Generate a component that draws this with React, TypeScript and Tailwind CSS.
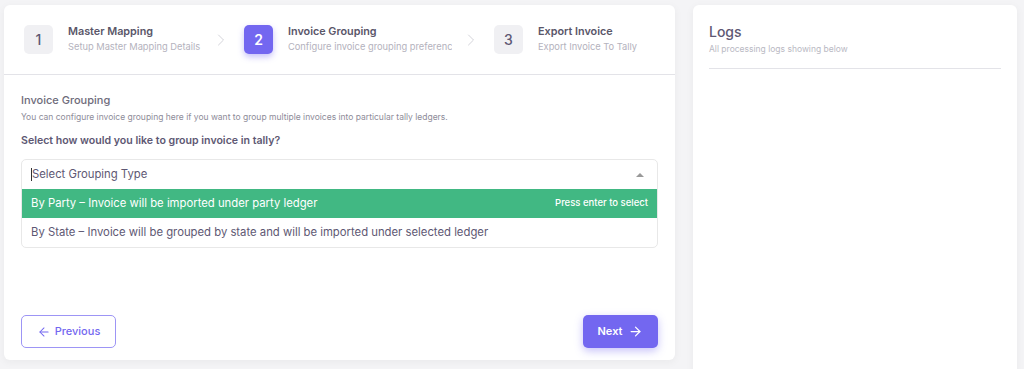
import { ChevronRight, ArrowLeft, ArrowRight } from "lucide-react";

const steps = [
  { n: "1", title: "Master Mapping", sub: "Setup Master Mapping Details", active: false, w: "w-[134px]" },
  { n: "2", title: "Invoice Grouping", sub: "Configure invoice grouping preferenc", active: true, w: "w-[164px]" },
  { n: "3", title: "Export Invoice", sub: "Export Invoice To Tally", active: false, w: "w-[130px]" },
];

export default function App() {
  return (
    <div
      className="w-[1024px] h-[369px] overflow-hidden bg-[#f4f4f6] flex gap-[18px] pl-[4px] pt-[5px] text-[#5e5873]"
      style={{ fontFamily: "Inter, 'Open Sans', sans-serif" }}
    >
      {/* wizard card */}
      <div className="w-[671px] h-[355px] bg-white rounded-md shadow-[0_2px_8px_rgba(34,41,47,0.05)] flex flex-col">
        <div className="h-[70px] border-b border-[#e3e3e8] flex items-center pl-[20px]">
          {steps.map((s, i) => (
            <div key={s.n} className="flex items-center">
              <div
                className={
                  s.active
                    ? "w-[29px] h-[29px] rounded-[5px] bg-[#7367f0] text-white flex items-center justify-center text-[14px] font-semibold shadow-[0_3px_6px_rgba(115,103,240,0.4)]"
                    : "w-[29px] h-[29px] rounded-[5px] bg-[#f0f0f3] text-[#5e5873] flex items-center justify-center text-[14px] font-medium"
                }
              >
                {s.n}
              </div>
              <div className={"ml-[15px] flex flex-col leading-none " + s.w}>
                <span className="text-[10.8px] font-semibold text-[#5a5669] whitespace-nowrap">{s.title}</span>
                <span className="text-[9.3px] text-[#b4b2bd] mt-[4px] whitespace-nowrap overflow-hidden">
                  {s.sub}
                </span>
              </div>
              {i < steps.length - 1 && (
                <ChevronRight className="w-[20px] h-[20px] text-[#cfcfd5] ml-[9px] mr-[13px]" strokeWidth={1.1} />
              )}
            </div>
          ))}
        </div>

        <div className="flex-1 flex flex-col px-[17px] pt-[20px] pb-[12px]">
          <div className="text-[11px] font-medium text-[#6e6b7b] leading-none">Invoice Grouping</div>
          <div className="text-[8.5px] text-[#8e8c99] mt-[7px] leading-none">
            You can configure invoice grouping here if you want to group multiple invoices into particular tally ledgers.
          </div>
          <div className="text-[10.6px] font-semibold text-[#5e5873] mt-[14px] leading-none">
            Select how would you like to group invoice in tally?
          </div>

          <div className="mt-[13px] border border-[#e8e8e8] rounded-[5px] bg-white overflow-hidden">
            <div className="h-[29px] flex items-center justify-between px-[9px] text-[11.3px] text-[#5e5873]">
              <span className="flex items-center">
                <span className="w-px h-[13px] bg-[#333]" />
                Select Grouping Type
              </span>
              <span className="w-0 h-0 border-l-[4px] border-r-[4px] border-b-[4px] border-l-transparent border-r-transparent border-b-[#999] mr-[4px]" />
            </div>
            <div className="h-[29px] flex items-center justify-between px-[9px] bg-[#41b883] text-white">
              <span className="text-[11.3px]">By Party – Invoice will be imported under party ledger</span>
              <span className="text-[9.5px] font-medium">Press enter to select</span>
            </div>
            <div className="h-[29px] flex items-center px-[9px] text-[11.3px] text-[#5e5873]">
              By State – Invoice will be grouped by state and will be imported under selected ledger
            </div>
          </div>

          <div className="mt-auto flex justify-between">
            <button className="w-[95px] h-[33px] border border-[#9d95f5] rounded-[5px] text-[#7367f0] text-[11px] font-medium flex items-center justify-center gap-[4px]">
              <ArrowLeft className="w-[14px] h-[14px]" strokeWidth={1.75} />
              Previous
            </button>
            <button className="w-[75px] h-[33px] bg-[#7367f0] rounded-[5px] text-white text-[11px] font-semibold flex items-center justify-center gap-[6px] shadow-[0_3px_8px_rgba(115,103,240,0.4)]">
              Next
              <ArrowRight className="w-[15px] h-[15px]" strokeWidth={2} />
            </button>
          </div>
        </div>
      </div>

      {/* logs card */}
      <div className="w-[324px] h-[380px] bg-white rounded-md shadow-[0_2px_8px_rgba(34,41,47,0.05)] px-[16px] pt-[20px]">
        <div className="text-[14px] font-medium text-[#5e5873] leading-none">Logs</div>
        <div className="text-[8.5px] text-[#b9b9c3] mt-[6px] leading-none">All processing logs showing below</div>
        <div className="mt-[14px] border-b border-[#e3e3e8]" />
      </div>
    </div>
  );
}
